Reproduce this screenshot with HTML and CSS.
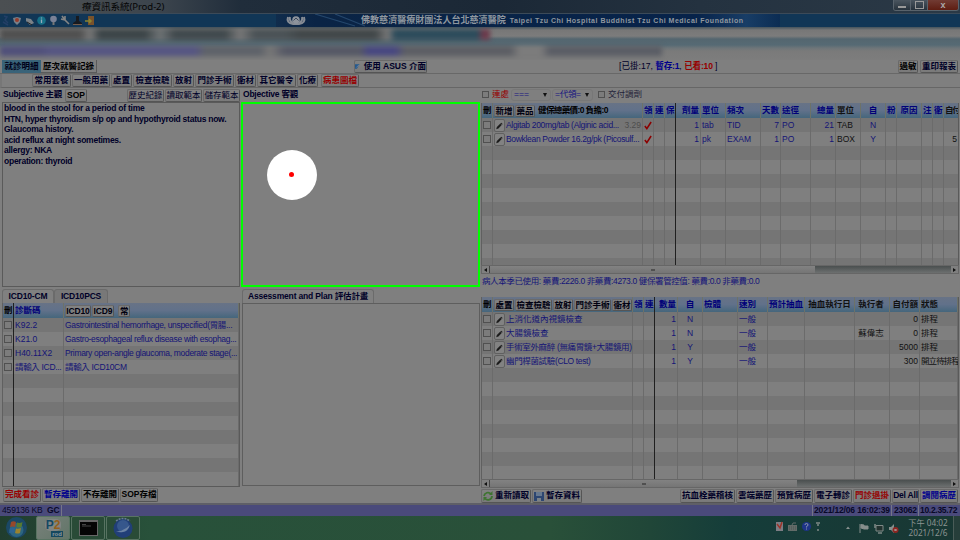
FILE: index.html
```html
<!DOCTYPE html>
<html lang="zh-Hant">
<head>
<meta charset="utf-8">
<title>醫療資訊系統</title>
<link rel="stylesheet" href="styles.css">
</head>
<body>
<header class="titlebar">
  <span class="title">療資訊系統(Prod-2)</span>
  <div class="winbtns"><i class="min"></i><i class="max"></i><i class="close">x</i></div>
</header>
<div class="banner">
  <svg class="tools" width="96" height="13" viewBox="0 0 96 13">
    <path d="M4 2 L7 3 L5 6 L8 9 M3 8 L8 11" stroke="#233f66" stroke-width="1.5" fill="none"/>
    <path d="M13 4 L17 3 L21 4 L20 8 L17 11 L14 8Z" fill="#777f88"/><circle cx="17" cy="6" r="2" fill="#963c2c"/>
    <path d="M26 4 L31 5 L34 9 L30 11 L26 7Z" fill="#7b8288"/><path d="M27 8 L32 11" stroke="#222"/>
    <circle cx="41.500" cy="6.500" r="4.300" fill="#167087"/><path d="M41.500 5.500 V9 M41.500 3.500 V4.500" stroke="#9ab" stroke-width="1.300"/>
    <circle cx="53.500" cy="5" r="3.300" fill="#7a8196"/><path d="M52.500 8 V11 H54.500 V8" fill="#777"/>
    <path d="M62 2 L65 6 L69 10 M65 2 L65 6 L61 5" stroke="#858585" stroke-width="1.600" fill="none"/>
    <path d="M76 2 H79 V7 L82 9 V11 H73 V9 L76 7Z" fill="#171a20"/><path d="M73 10.500 H82" stroke="#745b4a"/>
    <path d="M88 2 H94 V11 H88Z" fill="#79522b"/><path d="M85 7 H91 M89 5 L91 7 L89 9" stroke="#8b8430" stroke-width="1.500" fill="none"/>
  </svg>
  <div class="brand">
    <svg width="28" height="13" viewBox="0 0 28 13"><path d="M6 3 Q4 9 11 10 H17 Q24 9 22 3 M8 3 Q7 7 11 9 M20 3 Q21 7 17 9" fill="none" stroke="#858b94" stroke-width="2"/><circle cx="14" cy="6" r="3.800" fill="#8d939c"/><path d="M11.500 6.500 L14 4 L16.500 6.500" fill="none" stroke="#26364d" stroke-width=".8"/></svg>
    <svg class="swoosh" width="60" height="13" viewBox="0 0 60 13"><path d="M5 0 L45 12 M25 0 L55 12" stroke="#24466b" stroke-width="1.200"/></svg>
    <span class="brandtext"><span class="bz">佛教慈濟醫療財團法人台北慈濟醫院</span> <span class="be">Taipei Tzu Chi Hospital Buddhist Tzu Chi Medical Foundation</span></span>
  </div>
</div>
<div class="redacted"><div class="smear one"></div><div class="smear three"></div></div>
<div class="row tabs">
  <span class="maintab on">就診明細</span><span class="maintab">歷次就醫記錄</span>
  <span class="btn asus"><svg width="7" height="7" viewBox="0 0 7 7"><path d="M0 0 H7 L5 3 L3 7 H0Z" fill="#25598e"/><path d="M2 5 L6 1" stroke="#8796a5"/></svg>使用 ASUS 介面</span>
  <span class="counts">[<span>已掛:17</span>, <b class="bl">暫存:1</b>, <b class="rd">已看:10</b> ]</span>
  <span class="btn k allergy">過敏</span><span class="btn reprint">重印報表</span>
</div>
<div class="row quick">
  <span class="btn w39">常用套餐</span><span class="btn w38">一般用藥</span><span class="btn w22">處置</span><span class="btn w39">檢查檢驗</span><span class="btn w22">放射</span><span class="btn w39">門診手術</span><span class="btn w22">衛材</span><span class="btn w39">其它醫令</span><span class="btn w22">化療</span><span class="btn w38 rd gapl">病患圖檔</span>
</div>
<main class="work">
  <section class="left">
    <div class="notes">
      <div class="col">
        <div class="cap"><b class="captext">Subjective 主觀</b><span class="btn sop k">SOP</span><span class="btn t">歷史紀錄</span><span class="btn t">讀取範本</span><span class="btn t">儲存範本</span></div>
        <div class="text">
          <p>blood in the stool for a period of time</p><p>HTN, hyper thyroidism s/p op and hypothyroid status now.</p><p>Glaucoma history.</p><p>acid reflux at night sometimes.</p><p>allergy: NKA</p><p>operation: thyroid</p>
        </div>
      </div>
      <div class="col">
        <div class="cap"><b class="captext">Objective 客觀</b></div>
        <div class="canvas"><i class="disc"></i></div>
      </div>
    </div>
    <div class="plans">
      <div class="col">
        <div class="tabline"><span class="tab cm">ICD10-CM</span><span class="tab pcs">ICD10PCS</span></div>
        <div class="grid icd" id="icd"></div>
      </div>
      <div class="col">
        <div class="tabline"><span class="tab plan">Assessment and Plan 評估計畫</span></div>
        <div class="planbox"></div>
      </div>
    </div>
    <div class="actions">
      <span class="btn rd w38">完成看診</span><span class="btn bl w38">暫存離開</span><span class="btn k w38">不存離開</span><span class="btn k w38">SOP存檔</span>
    </div>
  </section>
  <section class="right">
    <div class="filters"><i class="chk"></i><span class="rd f1">連處</span><span class="sel s1">===<i></i></span><span class="sel s2">=代領=<i></i></span><i class="chk"></i><span class="f2">交付調劑</span></div>
    <div class="grid rx" id="rx"></div>
    <div class="scroll"><i class="la"></i><i class="thumb t1"></i><i class="ra"></i></div>
    <div class="usage">病人本季已使用: 藥費:2226.0 非藥費:4273.0 健保署管控值: 藥費:0.0 非藥費:0.0</div>
    <div class="grid ord" id="ord"></div>
    <div class="scroll"><i class="la"></i><i class="thumb t2"></i><i class="ra"></i></div>
    <div class="actions r">
      <span class="btn w50"><svg width="10" height="10" viewBox="0 0 10 10"><path d="M1 5 A4 4 0 0 1 8 3 M9 5 A4 4 0 0 1 2 7.500" fill="none" stroke="#3e7430" stroke-width="1.800"/><path d="M6 4 H9.500 V0Z M4 6 H.5 V10Z" fill="#3e7430"/></svg>重新讀取</span><span class="btn w50"><svg width="10" height="10" viewBox="0 0 10 10"><path d="M0 1 H10 V10 H0Z" fill="#2d4671"/><path d="M2 1 H8 V5 H2Z" fill="#66788f"/><path d="M3 7 H7 V10 H3Z" fill="#7b8288"/></svg>暫存資料</span>
      <span class="btn w55 push">抗血栓藥稽核</span><span class="btn w38">雲端藥歷</span><span class="btn w38">預覽病歷</span><span class="btn w38">電子轉診</span><span class="btn w38 rd">門診退掛</span><span class="btn del">Del All</span><span class="btn w38 bl">調閱病歷</span>
    </div>
  </section>
</main>
<div class="status"><span>459136 KB&nbsp; <b>GC</b></span><b class="s2011">2021/12/06 16:02:39</b><b class="s230">23062</b><b class="s10">10.2.35.72</b></div>
<footer class="taskbar">
  <svg class="orb" width="36" height="24" viewBox="0 0 36 24"><circle cx="16.500" cy="11.500" r="10.500" fill="#1b4866"/><circle cx="16.500" cy="14" r="7" fill="#2c6580"/><path d="M11 6 Q13.500 4.500 16 6 L15 11 Q12.500 10 10 11Z" fill="#98482a"/><path d="M17 6.500 Q20 7.500 22.500 6 L21.500 11 Q19 12 16.500 11Z" fill="#577b30"/><path d="M10 12 Q12.500 11 15 12 L14 17 Q11.500 16 9 17Z" fill="#2d6493"/><path d="M16 12.500 Q18.500 13 21 12 L20 17 Q18 18 15 17Z" fill="#9a832f"/></svg>
  <div class="app on"><span class="p2"><b>P</b><b class="o">2</b></span><span class="rod">rod</span></div>
  <div class="app"><svg width="19" height="16" viewBox="0 0 19 16"><path d="M0 0 H19 V16 H0Z" fill="#666"/><path d="M1 2 H18 V15 H1Z" fill="#050505"/><path d="M3 4.500 H7 M3 6 H12" stroke="#555" stroke-width=".8"/></svg></div>
  <div class="app"><svg width="22" height="22" viewBox="0 0 22 22"><circle cx="11" cy="11.500" r="9.500" fill="#213f78"/><circle cx="11" cy="9" r="6" fill="#36578c"/><path d="M4 4 Q11 -1 18 4" fill="none" stroke="#69799a" stroke-width="1.500" stroke-dasharray="2 1"/><path d="M4 14 Q9 15 11.500 12.500 Q15 11 18 8 Q16 14 11 15 Q7 16 4 14Z" fill="#6c83a5"/></svg></div>
  <svg class="tray" width="130" height="24" viewBox="0 0 130 24">
    <path d="M1 6 H8 V15 H1Z" fill="#7d7d84"/><path d="M2 8 L5 12 L7 6" fill="none" stroke="#9c3328" stroke-width="1.500"/>
    <path d="M13 9 H22 V15 H13Z" fill="#636b68"/><path d="M14 11 H21 M14 13 H21" stroke="#4c5753" stroke-dasharray="1 1"/><path d="M17 9 Q17 6 21 7" fill="none" stroke="#636b68"/>
    <circle cx="31.500" cy="10.500" r="4.500" fill="#1e3488"/><path d="M30 9 Q30 7.500 31.500 7.500 Q33 7.500 33 9 Q33 10 31.500 10.500 V11.500 M31.500 12.500 V13.500" fill="none" stroke="#8b95ae"/>
    <path d="M41 7 H45 M42 9 H44 M42 14 H44" stroke="#808a87" stroke-width="1.300"/>
    <path d="M71 13 L73 10.500 L75 13Z" fill="#8a9391"/>
    <path d="M85 8 V17 M86 8.500 L89 9 V10 H93 V13 H89 L86 12Z" stroke="#868e8c" fill="#868e8c"/>
    <path d="M101 9.500 H108 V15 H101Z" fill="#22322f" stroke="#7f8986"/><path d="M100 8 V12 M103 17 H107" stroke="#7f8986" stroke-width="1.500"/>
    <path d="M114 11 H116 L119 8 V17 L116 14 H114Z" fill="#858e8b"/><circle cx="120.500" cy="14" r="3" fill="#8c2621"/><path d="M119.500 13 L121.500 15 M121.500 13 L119.500 15" stroke="#aaa"/>
  </svg>
  <div class="clock"><span>下午 04:02</span><span>2021/12/6</span></div>
  <i class="desk"></i>
</footer>
<script src="tables.js"></script>
</body>
</html>
```
FILE: styles.css
```css
* { box-sizing: border-box; }
body { margin: 0; width: 960px; height: 540px; overflow: hidden; background: #7f7f7f; color: #000028; font: 8.5px "Liberation Sans", "Noto Sans CJK TC", sans-serif; display: flex; flex-direction: column; white-space: nowrap; }
i { font-style: normal; }
.rd { color: #960000 !important; }
.bl { color: #00008c !important; }
.k { color: #000 !important; }
.titlebar { height: 14px; flex: none; display: flex; justify-content: space-between; background: linear-gradient(90deg, #4b4f52 0, #474c50 82px, #3a434c 165px, #202d3b 240px, #1b2836 500px, #243240 700px, #2b3946 960px); border-bottom: 1px solid #3c4a58; }
.title { margin-left: 82px; line-height: 13px; font-size: 9.6px; color: #050505; font-family: "Noto Sans", "Noto Sans CJK TC", sans-serif; letter-spacing: -.1px; }
.winbtns { display: flex; height: 11px; margin-right: 1px; border: 1px solid #59636c; border-top: 0; border-radius: 0 0 3px 3px; overflow: hidden; }
.winbtns i { width: 17px; background: linear-gradient(#4a555f, #27323c); display: flex; align-items: center; justify-content: center; border-right: 1px solid #59636c; }
.min::after { content: ""; width: 8px; height: 2px; background: #999; margin-top: 4px; }
.max::after { content: ""; width: 7px; height: 6px; border: 1.5px solid #999; }
.winbtns .close { width: 30px; border: 0; background: linear-gradient(#713b33, #5e1d12); color: #aaa; font: bold 9px/9px "Liberation Sans", sans-serif; }
.banner { height: 13px; flex: none; display: flex; background: #113656; }
.tools { flex: none; }
.brand { margin-left: 180px; width: 504px; display: flex; align-items: center; background: linear-gradient(90deg, #102c4c, #0a2445 40px, #07234a 420px, #183d66 470px, #0b2c53); padding-left: 6px; }
.brandtext { color: #8f979f; font-weight: bold; margin-left: -9px; display: flex; align-items: center; gap: 4px; line-height: 13px; }
.bz { font-size: 9.05px; }
.be { font-size: 7px; letter-spacing: .51px; }
.redacted { height: 33px; flex: none; overflow: hidden; background: linear-gradient(#44535d 0, #777 3px, #7c7c7c 9px, #54666f 12px, #566a74 18px, #6d7579 21px, #7a7a7a 24px, #7d7d7d); display: flex; flex-direction: column; padding-top: 2px; }
.smear { filter: blur(2.5px); }
.one { height: 11px; width: 490px; background: linear-gradient(90deg, #505050 0 80px, #777 90px, #3c4548 100px 145px, #6d7274 160px, #40494d 175px 225px, #777 240px, #4a5256 255px 285px, #414749 300px 375px, #777 388px, #2c4b5b 395px 478px, #6b3a4b 482px); }
.three { height: 10px; width: 662px; margin-top: 6px; background: linear-gradient(90deg, #4f4f7a 0 40px, #555582 50px 195px, #5e6269 205px 260px, #777 270px, #555865 285px 360px, #474780 368px 395px, #5c5e64 405px 510px, #7c7c7c 520px 540px, #5a5d65 550px); }
.row { display: flex; flex: none; align-items: center; }
.tabs { height: 14px; padding-left: 2px; border-bottom: 1px solid #686868; }
.btn { display: inline-flex; align-items: center; justify-content: center; gap: 2px; height: 13px; flex: none; border: 1px solid #6a6a6a; border-right-color: #555; border-bottom-color: #555; border-radius: 2px; font-weight: bold; color: #000028; background: linear-gradient(#828282, #7a7a7a); line-height: 11px; }
.maintab { height: 13px; line-height: 12px; width: 56px; text-align: center; font-weight: bold; color: #000; border-right: 1px solid #5a5a5a; border-bottom: 1px solid #5a5a5a; }
.maintab.on { width: 39px; background: #396379; border: 0; color: #000018; }
.asus { width: 73px; margin-left: 257px; gap: 4px; }
.counts { margin-left: 192px; width: 105px; font-size: 8.6px; line-height: 11px; padding-bottom: 1px; }
.counts b { letter-spacing: -.2px; }
.allergy { width: 20px; margin-left: 174px; }
.reprint { width: 38px; margin-left: 2px; }
.quick { height: 14px; gap: 1px; border-bottom: 1px solid #666; border-left: 2px solid #777; padding-left: 30px; }
.w22 { width: 21px; } .w38 { width: 38px; } .w39 { width: 39px; } .w50 { width: 50px; } .w55 { width: 55px; }
.gapl { margin-left: 2px; }
.work { flex: 1; min-height: 0; display: flex; }
.left { width: 481px; padding-left: 2px; display: flex; flex-direction: column; }
.notes, .plans { display: flex; gap: 2px; }
.notes { height: 199px; } .plans { height: 200px; padding-top: 2px; }
.col { width: 238px; display: flex; flex-direction: column; }
.cap { height: 14px; display: flex; align-items: center; gap: 1px; flex: none; }
.captext { margin-left: 1px; letter-spacing: -.22px; width: 59px; line-height: 11px; padding-bottom: 1px; }
.sop { width: 22px; margin: 0 auto 0 2px; }
.t { width: 37px; font-weight: normal; }
.text { flex: 1; border: 1px solid #5a5a5a; padding: 0 0 0 1px; font-weight: bold; }
.text p { margin: 0; line-height: 10.5px; letter-spacing: -.25px; }
.canvas { flex: 1; width: 239px; margin-left: -1px; border: 2px solid #00ff00; padding: 45.5px 0 0 23.5px; }
.disc { display: flex; width: 50px; height: 50px; border-radius: 50%; background: #fff; align-items: center; justify-content: center; }
.disc::after { content: ""; width: 5px; height: 5px; border-radius: 50%; background: #f00; }
.tabline { height: 14px; flex: none; display: flex; font-weight: bold; letter-spacing: -.17px; }
.tab { border: 1px solid #6b6b6b; border-bottom: 0; border-radius: 3px 3px 0 0; text-align: center; line-height: 12px; background: #808080; }
.cm { width: 52px; } .pcs { width: 54px; background: #787878; } .plan { width: 132px; }
.planbox { flex: 1; border: 1px solid #5e5e5e; margin-bottom: 1px; }
.grid { overflow: hidden; border-right: 1px solid #5a5a5a; border-left: 1px solid #606060; }
.icd { height: 184px; border-bottom: 1px solid #5a5a5a; }
.rx { height: 162px; }
.ord { height: 182px; }
.tr { display: grid; height: 14px; line-height: 14px; background: #7f7f7f; }
.tr:nth-child(even) { background: #757575; }
.tr.th { height: 15px; line-height: 15px; background: linear-gradient(#687386, #61718a 50%, #45667c); font-weight: bold; }
.td { border-right: 1px solid #6b6b6b; padding: 0 1px; color: #141476; min-width: 0; display: flex; align-items: center; }
.th .td { border-right-color: #6d7268; color: #000078; gap: 1px; }
.td.dark { border-right-color: #202020; }
.td.r { justify-content: flex-end; } .td.c { justify-content: center; }
.td.k { color: #111 !important; }
.td em { margin-left: auto; font-style: normal; color: #4d4d4d; }
.th .btn { height: 12px; color: #000010; line-height: 10px; }
.th .btn.latin { letter-spacing: -.15px; }
.name { letter-spacing: -.32px; }
.total { color: #000; letter-spacing: -.6px; margin-left: 2px; }
.edge { letter-spacing: -1.3px; }
.status5 { letter-spacing: -.9px; }
.long { letter-spacing: -.35px; }
.push5 { margin-left: auto; }
.chk { width: 8px; height: 8px; flex: none; border: 1px solid #505050; background: #7c7c7c; margin: 0 auto; }
.pen { flex: none; width: 11px; height: 13px; margin: 0 1px 0 0; border: 1px solid #606060; border-radius: 2px; background: #828282; }
.right { width: 479px; display: flex; flex-direction: column; padding-right: 1px; }
.filters { height: 15px; flex: none; display: flex; align-items: center; padding: 0 0 2px 1px; line-height: 11px; }
.filters .chk { margin: 0; height: 7px; width: 7px; }
.f1 { margin: 0 2px 0 3px; }
.f2 { margin-left: 3px; color: #222238; }
.sel { display: flex; align-items: center; justify-content: space-between; color: #141480; height: 12px; border: 1px solid #777; border-radius: 3px; padding: 0 3px 0 2px; }
.sel i { border: 2.5px solid transparent; border-top: 4px solid #111; border-bottom: 0; }
.s1 { width: 40px; } .s2 { width: 41px; margin: 0 5px 0 1px; letter-spacing: -.3px; }
.scroll { height: 9px; flex: none; display: flex; background: linear-gradient(#4a4f4f, #6d7070); border: 1px solid #666; }
.la, .ra { width: 7px; display: flex; align-items: center; justify-content: center; background: #7f7f7f; }
.la::after, .ra::after { content: ""; border: 2px solid transparent; border-right: 3px solid #111; border-left: 0; }
.ra { margin-left: auto; } .ra::after { border-left: 3px solid #111; border-right: 0; }
.thumb { background: linear-gradient(#828282, #757575); border-left: 1px solid #444; display: flex; align-items: center; justify-content: center; }
.thumb::after { content: ""; width: 4px; height: 2px; background: #505050; }
.t1 { width: 326px; } .t2 { width: 308px; }
.usage { height: 23px; flex: none; line-height: 15px; color: #141478; padding-left: 1px; letter-spacing: -.38px; }
.actions { height: 15px; flex: none; display: flex; align-items: center; gap: 1px; padding-left: 1px; }
.actions.r { padding-left: 0; padding-right: 1px; }
.actions .btn { height: 14px; }
.push { margin-left: auto; }
.del { width: 27px; letter-spacing: -.2px; }
.status { height: 13px; flex: none; display: flex; background: #4a4a7b; border-top: 2px solid #5f5f67; line-height: 10px; letter-spacing: -.16px; color: #080828; padding-left: 2px; }
.status > * { padding-right: 2px; border-right: 1px solid #757588; }
.status .s2011 { margin-left: auto; border-left: 1px solid #757588; width: 80px; padding-left: 1px; }
.status .s230 { width: 27px; padding-left: 2px; } .status .s10 { width: 41px; padding: 0 0 0 1px; border: 0; letter-spacing: -.3px; }
.taskbar { height: 24px; flex: none; display: flex; background: linear-gradient(90deg, #203d2e, #28513a 150px, #295039 550px, #204638 650px, #153d3a 730px, #193733 960px); }
.orb { flex: none; }
.app { width: 34px; height: 24px; margin-right: 1px; display: flex; flex-direction: column; align-items: center; justify-content: center; border: 1px solid #587362; border-radius: 2px; background: #294b37; }
.app.on { background: linear-gradient(135deg, #78817b, #627568); }
.p2 { font: bold 12px/12px "Liberation Sans", sans-serif; color: #154863; background: #818583; border-radius: 5px; padding: 0 1px; }
.o { color: #925f1c; }
.rod { font: bold 6px/6px "Liberation Sans", sans-serif; color: #8e999e; background: #16485f; margin-left: 8px; padding: 0 1px; }
.tray { margin-left: auto; flex: none; }
.clock { width: 46px; display: flex; flex-direction: column; align-items: center; color: #8c9492; font: 8.2px/10px "Noto Sans", "Noto Sans CJK TC", sans-serif; padding-top: 2px; }
.desk { width: 7px; border-left: 1px solid #4a5c58; background: #263e3a; margin-left: 2px; }
```
FILE: tables.js
```js
const chk = '<i class="chk"></i>';
const pen = '<svg class="pen" viewBox="0 0 11 12"><path d="M1.500 10.500 L2.300 7.800 L7.500 2.500 L9.300 4.300 L4.200 9.600Z" fill="#1c1c1c"/><path d="M6.500 3.500 L8.300 5.300" stroke="#828282" stroke-width=".7"/></svg>';
const tick = '<svg width="9" height="11" viewBox="0 0 9 11"><path d="M1 6 L3.200 9 L8 1.500" fill="none" stroke="#8c0000" stroke-width="1.800"/></svg>';
const b = (text, w) => `<span class="btn latin" style="width:${w}px">${text}</span>`;
const z = (text, w) => `<span class="btn" style="width:${w}px">${text}</span>`;
const name = text => `<span class="name">${text}</span>`;

// align holds one letter list per column: r right, c centred, k black, d dark divider
function build(id, widths, align, head, rows, total) {
  const classes = letters => letters.split('').map(l => l === 'd' ? 'dark' : l).join(' ');
  const cells = list => widths.map((w, i) => `<div class="td ${classes(align[i] || '')}">${list[i] || ''}</div>`).join('');
  const cols = `grid-template-columns:${widths.map(w => w + 'px').join(' ')}`;
  let html = `<div class="tr th" style="${cols}">${cells(head)}</div>`;
  for (let i = 0; i < total; i++) {
    html += `<div class="tr" style="${cols}">${cells(rows[i] || [])}</div>`;
  }
  document.getElementById(id).innerHTML = html;
}

build('icd', [11, 50, 175], ['d', '', ''],
  ['<span class="k">刪</span>', '診斷碼', b('ICD10', 26) + b('ICD9', 22) + '&nbsp; ' + z('常', 12)],
  [[chk, 'K92.2', name('Gastrointestinal hemorrhage, unspecified(胃腸...')],
   [chk, 'K21.0', name('Gastro-esophageal reflux disease with esophag...')],
   [chk, 'H40.11X2', name('Primary open-angle glaucoma, moderate stage(...')],
   [chk, name('請輸入 ICD...'), name('請輸入 ICD10CM')]], 12);

build('rx', [11, 150, 11, 11, 11, 25, 25, 35, 20, 30, 25, 25, 25, 11, 25, 11, 11, 15],
  ['', '', '', '', 'd', 'r', '', '', 'r', '', 'r', 'k', 'c', '', 'c', '', '', 'k'],
  ['<span class="k">刪</span>', z('新增', 20) + z('藥品', 20) + '<span class="total">健保總藥價:0 負擔:0</span>', '領', '連', '保', '劑量', '單位', '頻次', '天數', '途徑', '總量', '單位', '自', '粉', '原因', '注', '衛', '<span class="edge">自付</span>'],
  [[chk, pen + name('Algitab 200mg/tab (Alginic acid...') + '<em>3.29</em>', tick, '', '', '1', 'tab', 'TID', '7', 'PO', '21', 'TAB', 'N'],
   [chk, pen + name('Bowklean Powder 16.2g/pk (Picosulf...'), tick, '', '', '1', 'pk', 'EXAM', '1', 'PO', '1', 'BOX', 'Y', '', '', '', '', '<span class="push5">5</span>']], 11);

build('ord', [11, 140, 11, 11, 23, 25, 35, 30, 37, 50, 35, 30, 38],
  ['', '', '', 'd', 'r', 'c', '', '', '', 'k', 'k', 'kr', 'k'],
  ['<span class="k">刪</span>', z('處置', 20) + z('檢查檢驗', 37) + z('放射', 20) + z('門診手術', 37) + z('衛材', 20), '領', '連', '數量', '自', '檢體', '速別', '預計抽血', '&nbsp;抽血執行日', '&nbsp;執行者', '自付額', '狀態'],
  [[chk, pen + '上消化道內視鏡檢查', '', '', '1', 'N', '', '一般', '', '', '', '0', '排程'],
   [chk, pen + '大腸鏡檢查', '', '', '1', 'N', '', '一般', '', '', '&nbsp;蘇偉志', '0', '排程'],
   [chk, pen + '<span class="long">手術室外麻醉 (無痛胃鏡+大腸鏡用)</span>', '', '', '1', 'Y', '', '一般', '', '', '', '5000', '排程'],
   [chk, pen + '<span class="long">幽門桿菌試驗(CLO test)</span>', '', '', '1', 'Y', '', '一般', '', '', '', '300', '<span class="status5">開立待排程</span>']], 12);
```
